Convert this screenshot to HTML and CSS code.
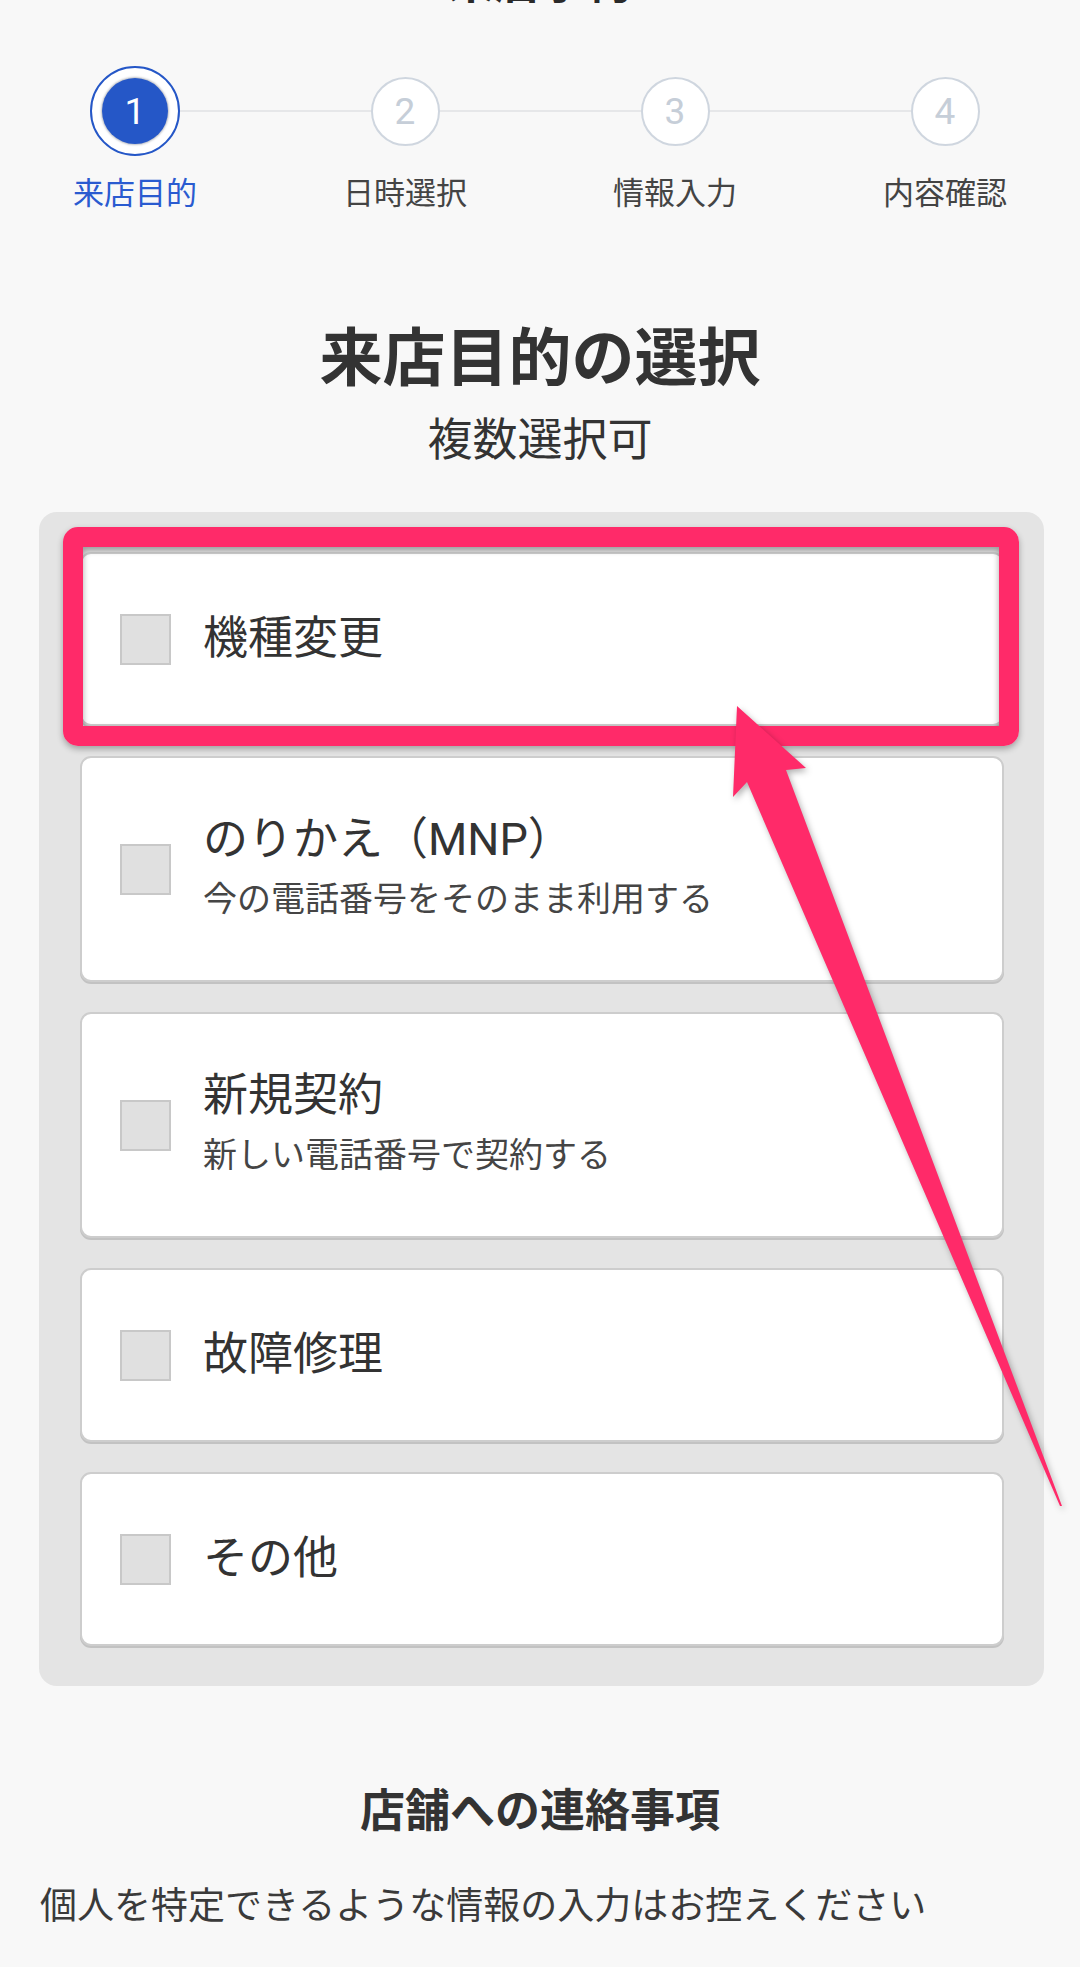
FILE: index.html
```html
<!DOCTYPE html>
<html lang="ja">
<head>
<meta charset="utf-8">
<title>来店予約</title>
<link rel="stylesheet" href="styles.css">
</head>
<body>
<div class="page">
  <h1 class="page-title">来店予約</h1>

  <ol class="steps">
    <li class="step active">
      <span class="step-wrap"><span class="step-ring"><span class="step-dot">1</span></span></span>
      <span class="step-label">来店目的</span>
    </li>
    <li class="step">
      <span class="step-wrap"><span class="step-dot">2</span></span>
      <span class="step-label">日時選択</span>
    </li>
    <li class="step">
      <span class="step-wrap"><span class="step-dot">3</span></span>
      <span class="step-label">情報入力</span>
    </li>
    <li class="step">
      <span class="step-wrap"><span class="step-dot">4</span></span>
      <span class="step-label">内容確認</span>
    </li>
  </ol>

  <section class="purpose">
    <h2 class="purpose-title">来店目的の選択</h2>
    <p class="purpose-sub">複数選択可</p>

    <div class="options">
      <label class="option single highlighted">
        <span class="checkbox"></span>
        <span class="option-text"><span class="option-label">機種変更</span></span>
        <span class="highlight-frame"></span>
      </label>
      <label class="option double">
        <span class="checkbox"></span>
        <span class="option-text">
          <span class="option-label">のりかえ（MNP）</span>
          <span class="option-desc">今の電話番号をそのまま利用する</span>
        </span>
      </label>
      <label class="option double">
        <span class="checkbox"></span>
        <span class="option-text">
          <span class="option-label">新規契約</span>
          <span class="option-desc">新しい電話番号で契約する</span>
        </span>
      </label>
      <label class="option single">
        <span class="checkbox"></span>
        <span class="option-text"><span class="option-label">故障修理</span></span>
      </label>
      <label class="option single">
        <span class="checkbox"></span>
        <span class="option-text"><span class="option-label">その他</span></span>
      </label>
    </div>
  </section>

  <section class="notes">
    <h2 class="notes-title">店舗への連絡事項</h2>
    <p class="notes-text">個人を特定できるような情報の入力はお控えください</p>
  </section>

  <svg class="arrow" viewBox="0 0 1080 1967" width="1080" height="1967" aria-hidden="true">
    <polygon points="737,747 806,809 786,811 1062,1547 1060,1547 747,823 733,838" fill="#ff2a69"/>
  </svg>
</div>
</body>
</html>
```

FILE: styles.css
```css
html, body {
  margin: 0;
  padding: 0;
}

body {
  background: #f8f8f8;
  font-family: Roboto, "Noto Sans CJK JP", "Noto Sans", sans-serif;
  color: #333;
  width: 1080px;
  height: 1967px;
  overflow: hidden;
}

.page {
  position: relative;
  width: 1080px;
  min-height: 1967px;
}

.page-title {
  margin: -41px 0 0;
  font-size: 46px;
  line-height: 46px;
  font-weight: 700;
  text-align: center;
  color: #2a2a2a;
}

/* steps */
.steps {
  list-style: none;
  margin: 61px 0 0;
  padding: 0;
  display: flex;
  position: relative;
}

.steps::before {
  content: "";
  position: absolute;
  top: 44px;
  left: 135px;
  right: 135px;
  height: 2px;
  background: #e6e7e9;
}

.step {
  flex: 1;
  display: flex;
  flex-direction: column;
  align-items: center;
  position: relative;
  z-index: 1;
}

.step-wrap {
  height: 90px;
  display: flex;
  align-items: center;
  justify-content: center;
}

.step-dot {
  width: 69px;
  height: 69px;
  box-sizing: border-box;
  border: 2px solid #cfd6df;
  border-radius: 50%;
  background: #fff;
  color: #c6ced8;
  font-family: Roboto, sans-serif;
  font-size: 37px;
  display: flex;
  align-items: center;
  justify-content: center;
}

.step-ring {
  width: 90px;
  height: 90px;
  box-sizing: border-box;
  border: 2px solid #2557c7;
  border-radius: 50%;
  background: #fff;
  display: flex;
  align-items: center;
  justify-content: center;
}

.step.active .step-dot {
  width: 66px;
  height: 66px;
  border: none;
  background: #2557c7;
  color: #fff;
  box-shadow: 0 0 2px 1px rgba(60, 70, 90, 0.35);
}

.step-label {
  margin-top: 18px;
  font-size: 31px;
  line-height: 40px;
  color: #444;
}

.step.active .step-label {
  color: #2a5bd0;
}

/* purpose */
.purpose-title {
  margin: 105px 0 0;
  font-size: 63px;
  line-height: 80px;
  font-weight: 700;
  text-align: center;
  color: #333;
}

.purpose-sub {
  margin: 12px 0 0;
  font-size: 45px;
  line-height: 60px;
  text-align: center;
  color: #333;
}

.options {
  margin: 41px 36px 0 39px;
  padding: 40px 40px 40px 41px;
  background: #e4e4e4;
  border-radius: 18px;
  display: flex;
  flex-direction: column;
  gap: 30px;
}

.option {
  position: relative;
  display: flex;
  align-items: center;
  box-sizing: border-box;
  background: #fff;
  border: 2px solid #cdcdcd;
  border-radius: 11px;
  box-shadow: 0 2px 0 #c2c2c2;
  padding: 0 38px;
}

.option.single {
  height: 174px;
}

.option.double {
  height: 226px;
}

.checkbox {
  flex: none;
  width: 51px;
  height: 51px;
  box-sizing: border-box;
  background: #e0e0e0;
  border: 2px solid #c8c8c8;
}

.option-text {
  margin-left: 32px;
  display: flex;
  flex-direction: column;
}

.option-label {
  font-size: 45px;
  line-height: 60px;
  color: #333;
}

.option-desc {
  font-size: 34px;
  line-height: 58px;
  color: #454545;
}

.highlight-frame {
  position: absolute;
  top: -27px;
  left: -19px;
  right: -17px;
  bottom: -22px;
  border: 20px solid #ff2a69;
  border-radius: 15px;
  box-shadow: 0 3px 6px rgba(0, 0, 0, 0.3), inset 0 3px 6px rgba(0, 0, 0, 0.35);
  pointer-events: none;
  z-index: 2;
}

/* notes */
.notes {
  padding: 0 40px;
}

.notes-title {
  margin: 96px 0 0;
  font-size: 45px;
  line-height: 60px;
  font-weight: 700;
  text-align: center;
  color: #333;
}

.notes-text {
  margin: 40px 0 0;
  font-size: 37px;
  line-height: 50px;
  color: #3a3a3a;
  white-space: nowrap;
}

.arrow {
  position: absolute;
  top: 0;
  left: 0;
  pointer-events: none;
  filter: drop-shadow(2px 3px 3px rgba(0, 0, 0, 0.3));
  z-index: 3;
}
```
